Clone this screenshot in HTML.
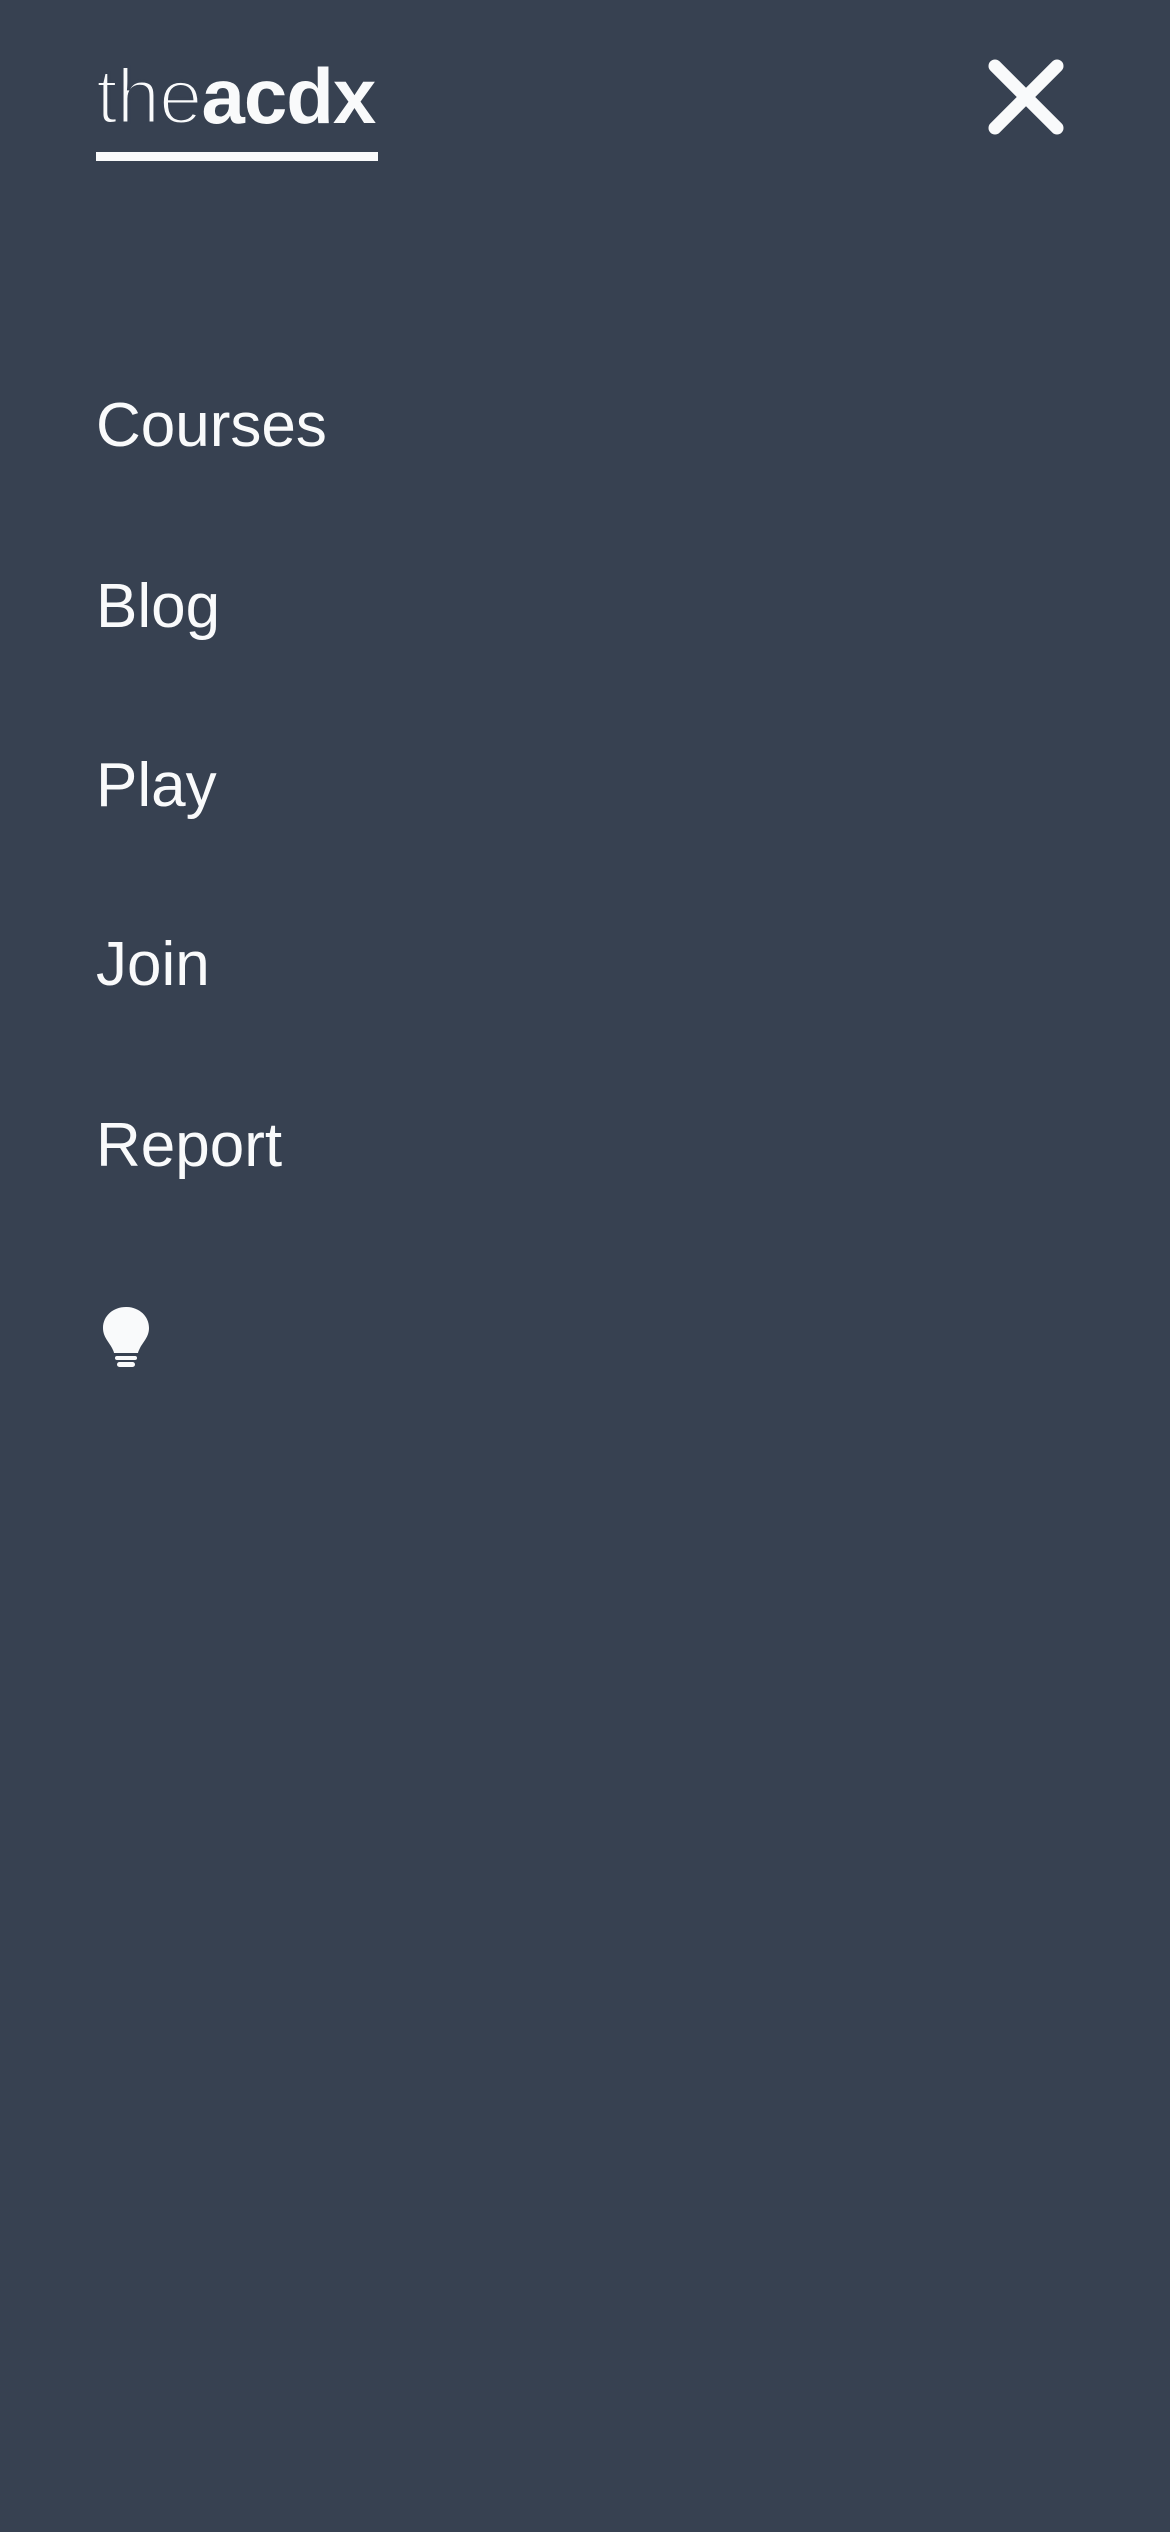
<!DOCTYPE html>
<html><head><meta charset="utf-8"><style>
html,body{margin:0;padding:0}
body{width:1170px;height:2532px;background:#374151;position:relative;overflow:hidden;font-family:"Liberation Sans",sans-serif;color:#f9fafb}
.logo{position:absolute;left:96px;top:57px;font-size:78px;line-height:78px;letter-spacing:-1px;white-space:nowrap}
.logo .t{font-weight:400;color:#f9fafb;-webkit-text-stroke:3px #374151}
.logo b{font-weight:700}
.ul{position:absolute;left:96px;top:152px;width:282px;height:9px;background:#f9fafb}
.m{position:absolute;left:96px;font-size:62px;line-height:62px;white-space:nowrap}
</style></head><body>
<div class="logo"><span class="t">the</span><b>acdx</b></div>
<div class="ul"></div>
<svg style="position:absolute;left:985px;top:56px" width="82" height="82" viewBox="0 0 82 82"><path d="M10 10L72 72M72 10L10 72" stroke="#f9fafb" stroke-width="13" stroke-linecap="round"/></svg>
<div class="m" style="top:395px">Courses</div>
<div class="m" style="top:576px">Blog</div>
<div class="m" style="top:755px">Play</div>
<div class="m" style="top:934px">Join</div>
<div class="m" style="top:1115px">Report</div>
<svg style="position:absolute;left:101px;top:1306px" width="50" height="62" viewBox="0 0 50 62"><path d="M25 1C12 1 2 10 2 22c0 9 6 14 9 20 1 2 2 4 2 5h24c0-1 1-3 2-5 3-6 9-11 9-20C48 10 38 1 25 1z" fill="#f9fafb"/><rect x="14" y="50" width="22" height="4" rx="2" fill="#f9fafb"/><rect x="16" y="56" width="18" height="5" rx="2.5" fill="#f9fafb"/></svg>
</body></html>
